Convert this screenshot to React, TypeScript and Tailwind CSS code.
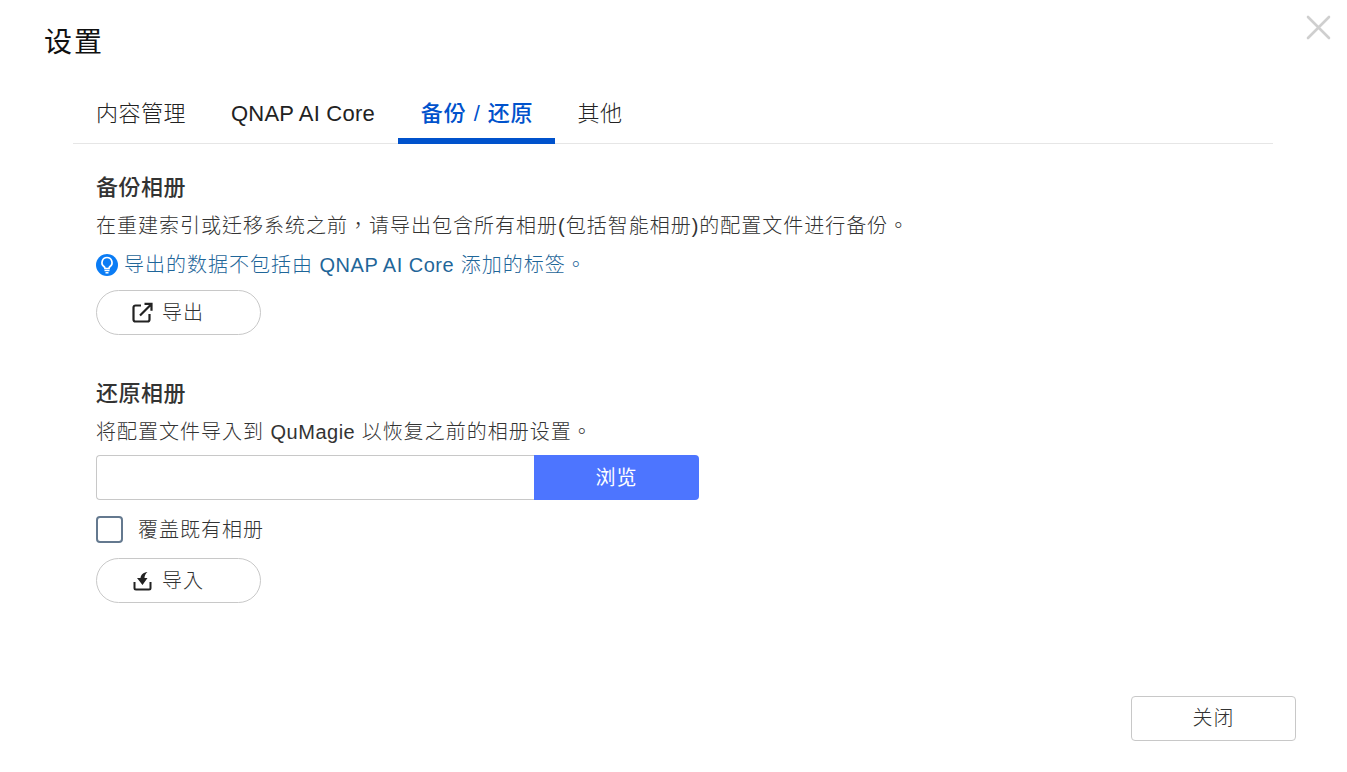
const font = { fontFamily: '"Liberation Sans", "Noto Sans CJK TC", sans-serif' };

function PillButton({ icon, label }: { icon: React.ReactNode; label: string }) {
  return (
    <button className="flex h-[45px] w-[165px] items-center justify-start gap-[9px] rounded-full border border-[#c8c8c8] bg-white pl-[35px] text-[20px] font-light tracking-[1px] text-[#333]">
      {icon}
      <span>{label}</span>
    </button>
  );
}

function ExportIcon() {
  return (
    <svg width="21" height="21" viewBox="0 0 21 21" fill="none" stroke="#222" strokeWidth="2.200">
      <path d="M9 3.500H3.500A2 2 0 0 0 1.500 5.500v12a2 2 0 0 0 2 2h12a2 2 0 0 0 2-2V12" />
      <path d="M8 13.500 18.500 3M12.500 1.800h7v7" />
    </svg>
  );
}

function ImportIcon() {
  return (
    <svg width="21" height="20" viewBox="0 0 20 20" fill="none">
      <path d="M2 11v6a1.500 1.500 0 0 0 1.500 1.500h13A1.500 1.500 0 0 0 18 17v-6" stroke="#222" strokeWidth="2" />
      <path d="M15 1c-4.500 0.500-6.500 2.500-7 6H4.500l5.500 7 5-7h-3c0-2.500 1-4.500 3-6z" fill="#222" />
    </svg>
  );
}

function BulbIcon() {
  return (
    <svg width="22" height="22" viewBox="0 0 22 22">
      <circle cx="11" cy="11" r="11" fill="#0a7cf5" />
      <path d="M11 3.500a5 5 0 0 0-3 9c.6.5 1 1 1 2h4c0-1 .4-1.500 1-2a5 5 0 0 0-3-9z" fill="none" stroke="#fff" strokeWidth="1.700" />
      <path d="M8.500 16.500h5M9.500 18.800h3" stroke="#fff" strokeWidth="1.500" />
    </svg>
  );
}

function CloseIcon() {
  return (
    <svg className="absolute right-[16px] top-[15px]" width="25" height="25" viewBox="0 0 25 25" stroke="#cfcfcf" strokeWidth="2.600" strokeLinecap="round">
      <path d="M2 2 23 23M23 2 2 23" />
    </svg>
  );
}

export default function App() {
  return (
    <div className="relative h-[772px] w-[1347px] overflow-hidden bg-white" style={font}>
      <CloseIcon />
      <h1 className="pl-[44px] pt-[23px] text-[28px] leading-[40px] font-normal tracking-[2px] text-[#111]">设置</h1>

      <div className="ml-[73px] mr-[74px] mt-[22px] flex h-[59px] border-b border-[#e6e6e6] text-[22px] text-[#222]">
        <div className="pl-[23px] pr-[22px] pt-[12px] font-light tracking-[0.5px]">内容管理</div>
        <div className="px-[23px] pt-[12px] tracking-[0.2px]">QNAP AI Core</div>
        <div className="h-[59px] border-b-[6px] border-[#0052cc] pl-[23px] pr-[21px] pt-[12px] font-medium tracking-[0.9px] text-[#0052cc]">备份 / 还原</div>
        <div className="px-[23px] pt-[12px] font-light tracking-[0.5px]">其他</div>
      </div>

      <div className="px-[96px] pt-[29px]">
        <h2 className="text-[22px] leading-[30px] font-medium tracking-[0.5px] text-[#333]">备份相册</h2>
        <p className="mt-[9px] text-[20px] leading-[28px] font-light tracking-[1px] text-[#333]">在重建索引或迁移系统之前，请导出包含所有相册(包括智能相册)的配置文件进行备份。</p>
        <div className="mt-[10px] flex h-[30px] items-center gap-[6px]">
          <BulbIcon />
          <span className="text-[20px] font-light tracking-[1px] text-[#1f6699]">
            导出的数据不包括由 <span className="tracking-[0.5px]">QNAP AI Core</span> 添加的标签。
          </span>
        </div>
        <div className="mt-[10px]">
          <PillButton icon={<ExportIcon />} label="导出" />
        </div>

        <h2 className="mt-[44px] text-[22px] leading-[30px] font-medium tracking-[0.5px] text-[#333]">还原相册</h2>
        <p className="mt-[9px] text-[20px] leading-[28px] font-light tracking-[1px] text-[#333]">
          将配置文件导入到 <span className="tracking-[0.5px]">QuMagie</span> 以恢复之前的相册设置。
        </p>

        <div className="mt-[9px] flex h-[45px] w-[603px]">
          <div className="flex-1 rounded-l-[4px] border border-r-0 border-[#c8c8c8]" />
          <button className="w-[165px] rounded-r-[4px] bg-[#4d75ff] text-[20px] tracking-[1px] text-white">浏览</button>
        </div>

        <label className="mt-[16px] flex items-start gap-[15px]">
          <span className="h-[27px] w-[27px] rounded-[4px] border-2 border-[#64798f]" />
          <span className="pt-[1px] text-[20px] leading-[26px] font-light tracking-[1px] text-[#333]">覆盖既有相册</span>
        </label>

        <div className="mt-[15px]">
          <PillButton icon={<ImportIcon />} label="导入" />
        </div>
      </div>

      <button className="absolute right-[51px] top-[696px] h-[45px] w-[165px] rounded-[4px] border border-[#c8c8c8] bg-white pb-[2px] text-[20px] font-light tracking-[1px] text-[#333]">关闭</button>
    </div>
  );
}
